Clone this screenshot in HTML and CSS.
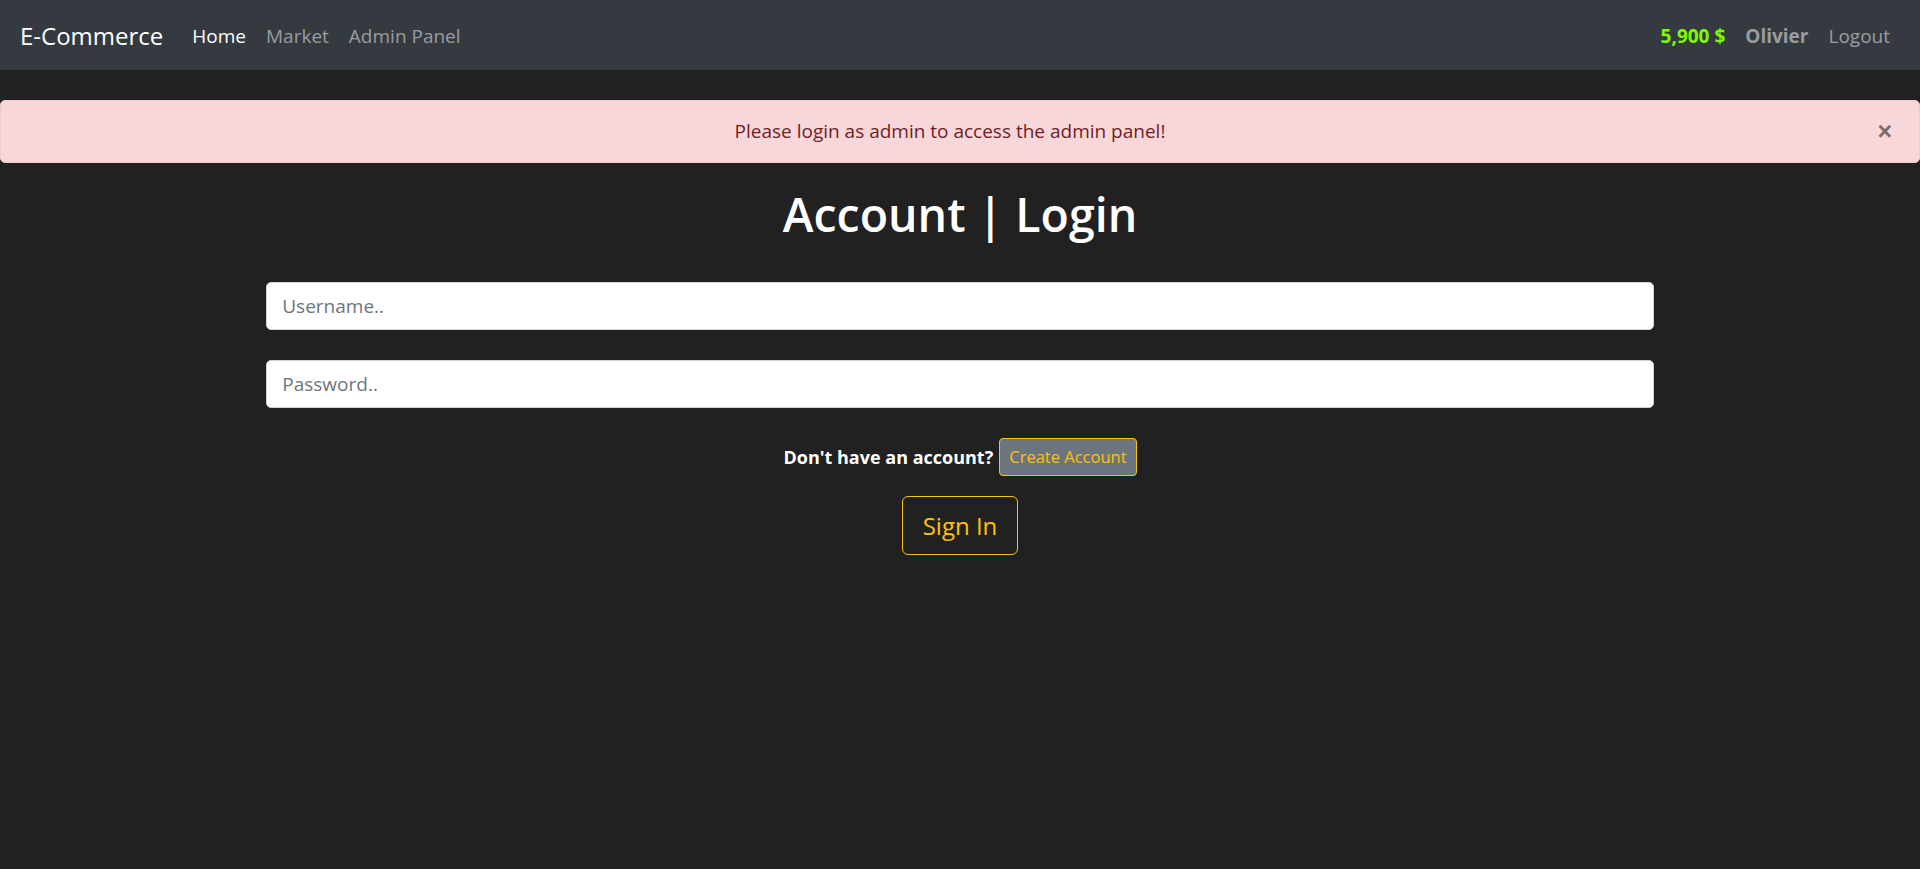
FILE: index.html
```html
<!DOCTYPE html>
<html lang="en">
<head>
<meta charset="utf-8">
<title>Account | Login</title>
<link rel="stylesheet" href="styles.css">
</head>
<body>
<nav class="navbar">
  <a class="brand" href="#">E-Commerce</a>
  <ul class="nav">
    <li><a class="nav-link active" href="#">Home</a></li>
    <li><a class="nav-link" href="#">Market</a></li>
    <li><a class="nav-link" href="#">Admin Panel</a></li>
  </ul>
  <ul class="nav nav-right">
    <li><span class="nav-link budget">5,900 $</span></li>
    <li><span class="nav-link user">Olivier</span></li>
    <li><a class="nav-link" href="#">Logout</a></li>
  </ul>
</nav>
<main class="main">
  <div class="alert">
    <span class="alert-text">Please login as admin to access the admin panel!</span>
    <button class="close" type="button" aria-label="Close">&times;</button>
  </div>
  <div class="container">
    <h1 class="title">Account | Login</h1>
    <form class="form">
      <input class="form-control" type="text" placeholder="Username..">
      <input class="form-control" type="password" placeholder="Password..">
      <div class="signup-row">
        <span class="signup-text">Don't have an account?</span>
        <a class="btn-create" href="#">Create Account</a>
      </div>
      <div class="submit-row">
        <button class="btn-signin" type="submit">Sign In</button>
      </div>
    </form>
  </div>
</main>
</body>
</html>
```
FILE: styles.css
```css
* { box-sizing: border-box; }
html, body { margin: 0; padding: 0; }
body {
  background: #212121;
  font-family: "Open Sans", "Noto Sans", sans-serif;
  color: #fff;
  min-height: 869px;
}
.navbar {
  height: 70px;
  background: #343a40;
  display: flex;
  align-items: center;
  padding: 2px 20px 0;
}
.brand {
  color: #fff;
  text-decoration: none;
  font-size: 24px;
  line-height: 36px;
  margin-right: 19px;
}
.nav {
  list-style: none;
  margin: 0;
  padding: 0;
  display: flex;
}
.nav-right { margin-left: auto; }
.nav-link {
  display: block;
  padding: 0 10px;
  font-size: 19px;
  line-height: 30px;
  color: rgba(255,255,255,.5);
  text-decoration: none;
}
.nav-link.active { color: #fff; }
.budget { color: #7cfc00; font-weight: 700; }
.user { font-weight: 700; }
.main { padding-top: 30px; }
.alert {
  position: relative;
  height: 62.5px;
  background: #f8d7da;
  border: 1px solid #f5c6cb;
  border-radius: 5px;
  color: #721c24;
  display: flex;
  align-items: center;
  justify-content: center;
  padding: 0 40px 0 20px;
  font-size: 19px;
}
.close {
  position: absolute;
  right: 27px;
  top: 50%;
  transform: translateY(-50%);
  background: none;
  border: 0;
  padding: 0;
  font-family: "Liberation Sans", sans-serif;
  font-size: 25px;
  font-weight: 700;
  line-height: 1;
  color: #000;
  opacity: .5;
}
.container {
  width: 1387.5px;
  margin: 0 auto;
}
.title {
  margin: 21.5px 0 0;
  text-align: center;
  font-size: 46.5px;
  line-height: 60px;
  font-weight: 600;
}
.form {
  margin-top: 38px;
  display: flex;
  flex-direction: column;
}
.form-control {
  display: block;
  width: 100%;
  height: 47.5px;
  padding: 0 15px;
  font-family: inherit;
  font-size: 19px;
  color: #495057;
  background: #fff;
  border: 1px solid #ced4da;
  border-radius: 5px;
  margin: 0 0 30.5px;
}
.form-control::placeholder { color: #6c757d; }
.signup-row {
  display: flex;
  justify-content: center;
  align-items: center;
  gap: 6px;
}
.signup-text {
  font-weight: 700;
  font-size: 18px;
}
.btn-create {
  display: inline-block;
  padding: 0 9px;
  height: 37.5px;
  line-height: 35.5px;
  font-size: 16.5px;
  color: #ffc107;
  background: #6c757d;
  border: 1px solid #ffc107;
  border-radius: 4px;
  text-decoration: none;
}
.submit-row {
  display: flex;
  justify-content: center;
  margin-top: 20.5px;
}
.btn-signin {
  height: 59px;
  padding: 0 20px;
  font-family: inherit;
  font-size: 24px;
  color: #ffc107;
  background: transparent;
  border: 1px solid #ffc107;
  border-radius: 6px;
}
```
